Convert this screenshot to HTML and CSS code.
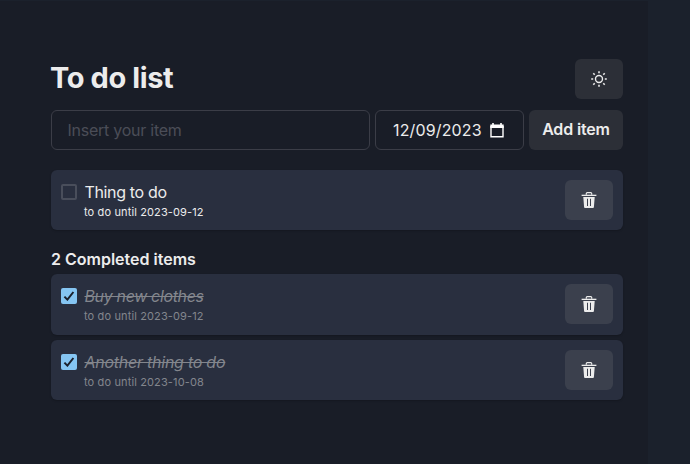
FILE: index.html
```html
<!DOCTYPE html>
<html lang="en">
<head>
<meta charset="utf-8">
<title>To do list</title>
<link rel="stylesheet" href="styles.css">
</head>
<body>
<svg class="defs" width="0" height="0">
  <symbol id="trash" viewBox="0 0 16 16">
    <path d="M5.3 2.7V1.5Q5.3.6 6.2.6h3.6q.9 0 .9.9v1.2" fill="none" stroke="currentColor" stroke-width="1.2"/>
    <path fill="currentColor" d="M.6 2.7h14.8V4H.6z"/>
    <path fill="currentColor" fill-rule="evenodd" d="M2.3 5h11.4l-.8 10.2q-.1.8-.9.8H4q-.8 0-.9-.8zM6 6.8v7.1h1V6.8zm3 0v7.1h1V6.8z"/>
  </symbol>
  <symbol id="check" viewBox="0 0 12 10">
    <path d="M1.4 5.6 4.4 8.6 10.4 1" fill="none" stroke="currentColor" stroke-width="2"/>
  </symbol>
</svg>
<main class="panel">
  <header class="header">
    <h1 class="title">To do list</h1>
    <button class="button theme" aria-label="Toggle theme">
      <svg width="16" height="16" viewBox="0 0 16 16" fill="none" stroke="currentColor" stroke-width="1.4">
        <circle cx="8" cy="8" r="3.5"/>
        <path stroke-width="1.6" d="M8 .2v2M8 13.8v2M.2 8h2M13.8 8h2M2.3 2.3l1.4 1.4M12.3 12.3l1.4 1.4M2.3 13.7l1.4-1.4M12.3 3.7l1.4-1.4"/>
      </svg>
    </button>
  </header>
  <form class="form">
    <input class="field" placeholder="Insert your item" aria-label="Item">
    <div class="date"><span>12/09/2023</span>
      <svg width="14" height="15" viewBox="0 0 14 15" fill="none"><path fill="#fff" d="M2.2 0h1.6v2H2.2zM10.2 0h1.6v2h-1.6zM.3 1.5h13.4V5H.3z"/><path stroke="#fff" stroke-width="1.4" d="M1 3v10.8h12V3"/></svg>
    </div>
    <button class="button add" type="button">Add item</button>
  </form>
  <section class="list">
    <article class="item">
      <span class="box"></span>
      <div class="text"><p class="name">Thing to do</p><p class="until">to do until 2023-09-12</p></div>
      <button class="button delete" aria-label="Delete"><svg width="16" height="16"><use href="#trash"/></svg></button>
    </article>
  </section>
  <h2 class="subtitle">2 Completed items</h2>
  <section class="list">
    <article class="item done">
      <span class="box"><svg width="12" height="10"><use href="#check"/></svg></span>
      <div class="text"><p class="name">Buy new clothes</p><p class="until">to do until 2023-09-12</p></div>
      <button class="button delete" aria-label="Delete"><svg width="16" height="16"><use href="#trash"/></svg></button>
    </article>
    <article class="item done">
      <span class="box"><svg width="12" height="10"><use href="#check"/></svg></span>
      <div class="text"><p class="name long">Another thing to do</p><p class="until">to do until 2023-10-08</p></div>
      <button class="button delete" aria-label="Delete"><svg width="16" height="16"><use href="#trash"/></svg></button>
    </article>
  </section>
</main>
</body>
</html>
```

FILE: styles.css
```css
* { box-sizing: border-box; margin: 0; padding: 0; }
html { height: 100%; }
body {
  height: 100%;
  overflow: hidden;
  padding-top: 1px;
  background: #1b212c;
  color: #ececec;
  font: 16px/24px Inter, "Liberation Sans", sans-serif;
}
.defs { position: absolute; }
.panel {
  width: 648px;
  height: 463px;
  padding: 58px 25px 0 51px;
  background: #191d27;
}
.header { display: flex; justify-content: space-between; height: 51px; }
.title { margin-left: -1px; font-size: 29px; line-height: 38px; font-weight: 700; letter-spacing: -0.4px; }
.button {
  display: flex;
  align-items: center;
  justify-content: center;
  flex: none;
  height: 40px;
  border: 0;
  border-radius: 6px;
  background: #2c2f37;
  color: #ececec;
  font: inherit;
}
.theme, .delete { width: 48px; }
.form { display: flex; gap: 5px; height: 40px; }
.field {
  width: 319px;
  min-width: 0;
  padding: 0 15.5px;
  border: 1px solid #3b3d47;
  border-radius: 6px;
  background: none;
  font: inherit;
  letter-spacing: -0.25px;
  color: inherit;
}
.field::placeholder { color: #4b4d57; opacity: 1; }
.date {
  display: flex;
  align-items: center;
  justify-content: space-between;
  width: 149px;
  padding: 0 19px 0 17px;
  border: 1px solid #3b3d47;
  border-radius: 6px;
  letter-spacing: 0.15px;
}
.add { width: 94px; padding-bottom: 2px; font-weight: 600; letter-spacing: -0.15px; }
.list { display: grid; gap: 5px; }
.form + .list { margin-top: 20px; }
.item {
  display: flex;
  height: 60px;
  padding: 10px;
  border-radius: 6px;
  background: #292f3f;
  box-shadow: 0 1px 2px rgba(0, 0, 0, 0.2);
}
.box {
  flex: none;
  display: flex;
  align-items: center;
  justify-content: center;
  width: 16px;
  height: 16px;
  margin: 4px 7px 0 0;
  border: 2px solid #494e5b;
  border-radius: 2px;
}
.done .box { border: 0; background: #85c5f2; color: #1a202c; }
.text { flex: 1; }
.name { padding-left: 0.5px; letter-spacing: -0.35px; }
.name.long { letter-spacing: -0.25px; }
.until { font-size: 11px; line-height: 16px; letter-spacing: 0.13px; }
.done .text { color: #83868d; }
.done .name { font-style: italic; text-decoration: line-through; }
.delete { background: #3b404d; }
.subtitle { margin: 17px 0 3px; font-size: 16px; line-height: 24px; font-weight: 600; }
.done:first-child { height: 61px; }
```
